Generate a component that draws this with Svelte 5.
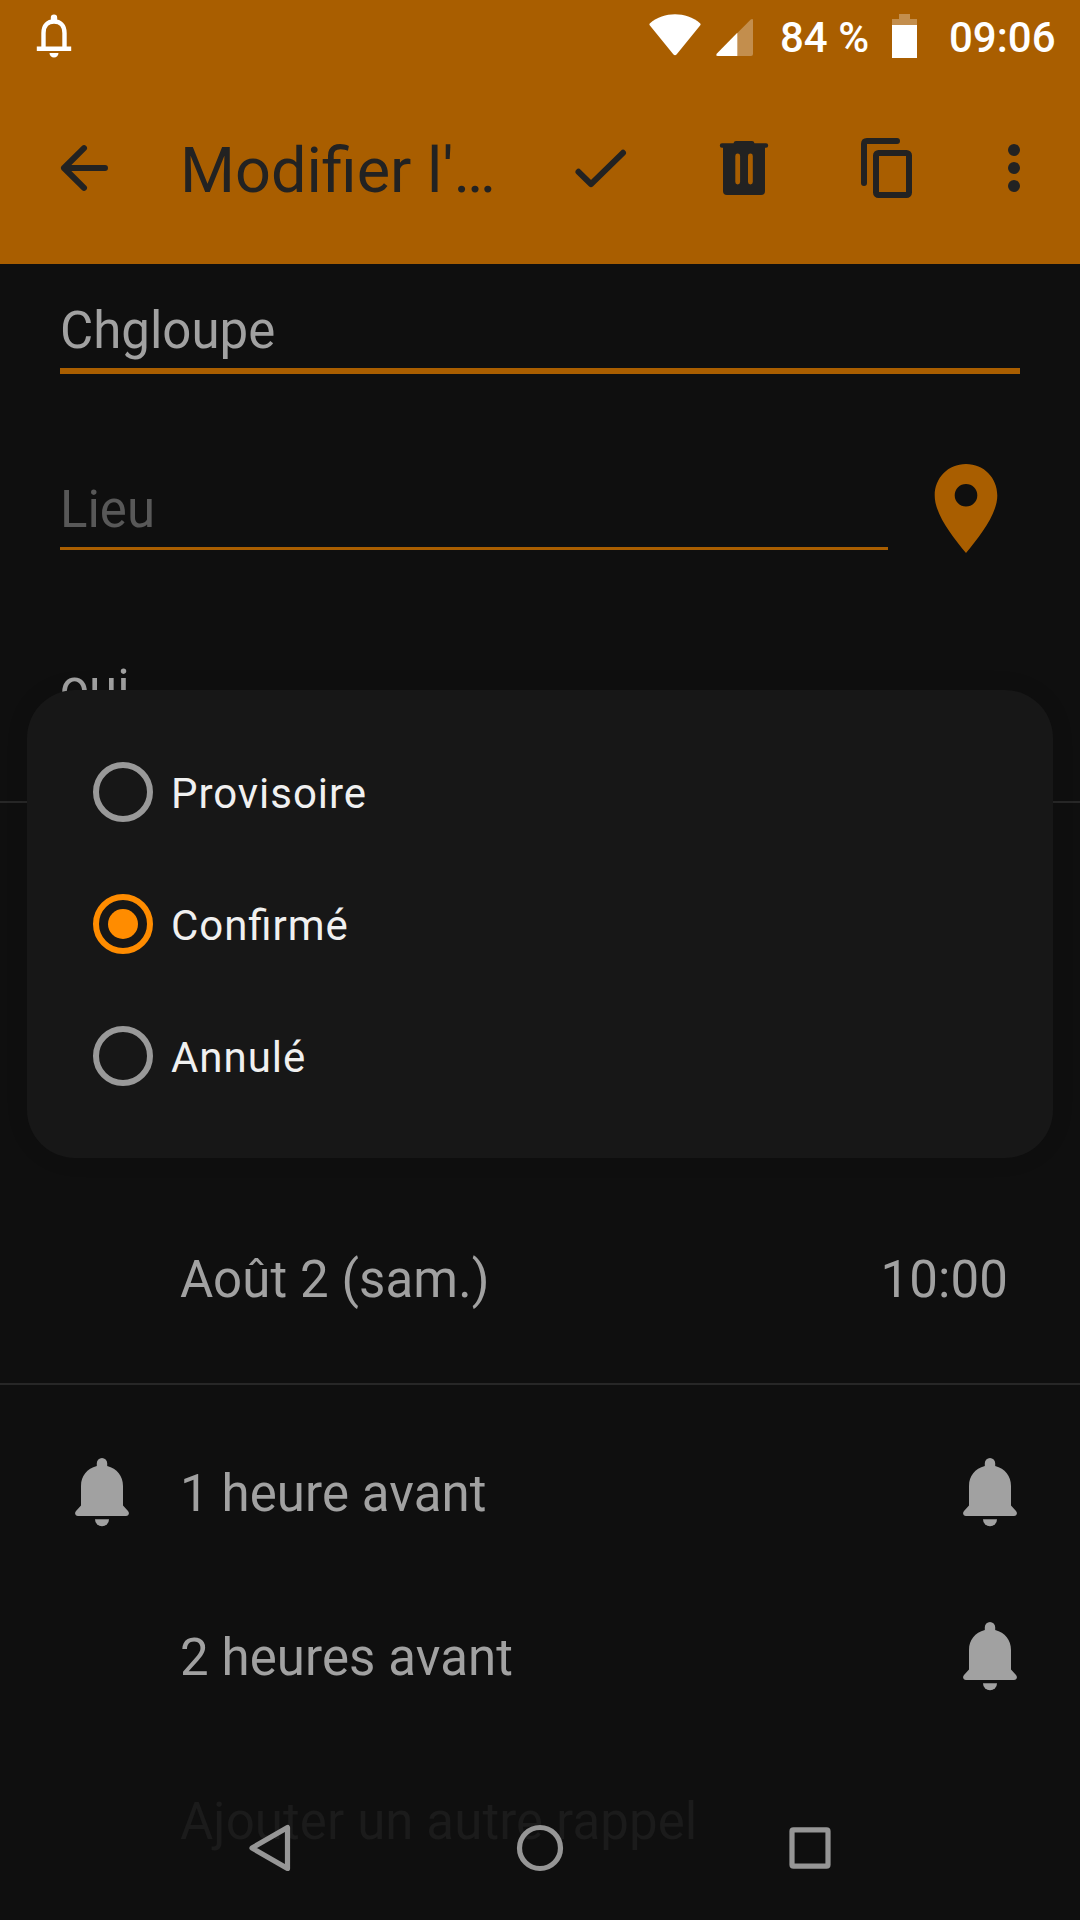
<script lang="ts">
	const statuses = ['Provisoire', 'Confirmé', 'Annulé'];
	const reminders = ['1 heure avant', '2 heures avant'];

	let selected = $state('Confirmé');
</script>

{#snippet bell()}
	<svg class="bell" viewBox="0 0 54 69" fill="currentColor">
		<path
			d="M21.800 8V5.200a5.200 5.200 0 0 1 10.400 0V8C42 10.500 48 18 48 28v19.500l5 5.500c2 2.500.5 5-2 5H3c-2.500 0-4-2.500-2-5l5-5.500V28C6 18 12 10.500 21.800 8z"
		/>
		<path d="M20 61.300h14a7 7 0 0 1-14 0z" />
	</svg>
{/snippet}

<div class="screen">
	<header>
		<div class="status-bar">
			<svg class="notification" width="36" height="44" viewBox="0 0 36 44">
				<path
					d="M7.500 34V19C7.500 11 12 7.500 18 7.500S28.500 11 28.500 19v15"
					fill="none"
					stroke="#fff"
					stroke-width="4.400"
				/>
				<path
					d="M14.800 7V3.800a3.200 3.200 0 0 1 6.400 0V7zM.8 32.600h34.400V37H.8zM13.500 39h9a4.500 4.500 0 0 1-9 0z"
					fill="#fff"
				/>
			</svg>
			<svg class="wifi" width="52" height="42" viewBox="0 0 52 42" fill="#fff">
				<path
					d="M1 9.200C15-2.600 37-2.600 51 9.200q1 1 .3 2L27.500 40.500q-1.500 1.500-3 0L.7 11.200q-.7-1 .3-2z"
				/>
			</svg>
			<svg class="signal" width="37" height="37" viewBox="0 0 37 37" fill="#fff">
				<path d="M34.500.8Q37-1 37 1.500V35q0 2-2 2H2Q-.8 37 1 34.500z" opacity=".3" />
				<path d="M21.300 13.800V37H2Q-.8 37 1 34.500z" />
			</svg>
			<span class="battery-level">84 %</span>
			<svg class="battery" width="25" height="44" viewBox="0 0 25 44" fill="#fff">
				<path d="M7 0h11v5h7v6H0V5h7z" opacity=".3" />
				<path d="M0 11h25v33H0z" />
			</svg>
			<span class="clock">09:06</span>
		</div>

		<div class="app-bar">
			<button type="button" class="icon-button back" aria-label="Retour">
				<svg viewBox="0 0 72 72">
					<path d="M57 36H16M36 16.200 16 36l20 19.800" class="line" />
				</svg>
			</button>
			<h1>Modifier l'…</h1>
			<button type="button" class="icon-button" aria-label="Enregistrer">
				<svg viewBox="0 0 72 72">
					<path d="M14.500 39.800 27 52.200 59 20.800" class="line" />
				</svg>
			</button>
			<button type="button" class="icon-button" aria-label="Supprimer">
				<svg viewBox="0 0 72 72" fill="currentColor">
					<path
						fill-rule="evenodd"
						d="M28 9h16q2 0 2.500 2.300H58a2.200 2.200 0 0 1 0 4.400h-1V59q0 4-4 4H19q-4 0-4-4V15.700h-1a2.200 2.200 0 0 1 0-4.400h11.500Q26 9 28 9zM27.300 24v26a2.400 2.400 0 0 0 4.800 0V24a2.400 2.400 0 0 0-4.800 0zM40 24v26a2.400 2.400 0 0 0 4.800 0V24a2.400 2.400 0 0 0-4.800 0z"
					/>
				</svg>
			</button>
			<button type="button" class="icon-button" aria-label="Dupliquer">
				<svg viewBox="0 0 72 72">
					<path d="M45 9H15q-3 0-3 3v39" class="line" />
					<rect x="24" y="21" width="33" height="42" rx="2.500" class="line" />
				</svg>
			</button>
			<button type="button" class="icon-button more" aria-label="Plus">
				<svg viewBox="0 0 72 72" fill="currentColor">
					<circle cx="36" cy="18" r="6" />
					<circle cx="36" cy="36" r="6" />
					<circle cx="36" cy="54" r="6" />
				</svg>
			</button>
		</div>
	</header>

	<main>
		<section class="details">
			<div class="field focused">Chgloupe</div>
			<div class="location">
				<div class="field hint">Lieu</div>
				<svg class="pin" width="64" height="89" viewBox="0 0 64 89">
					<path
						fill="#a95e00"
						fill-rule="evenodd"
						d="M32 0C14 0 .700 14 .700 31.500.700 50 18 72 32 89 46 72 63.300 50 63.300 31.500 63.300 14 50 0 32 0zM32 20a11.300 11.300 0 1 1 0 22.600A11.300 11.300 0 0 1 32 20z"
					/>
				</svg>
			</div>
			<div class="description">oui</div>
		</section>

		<section class="dates">
			<div class="row">
				<span class="label">Août 2 (sam.)</span>
				<span class="label time">10:00</span>
			</div>
		</section>

		<section class="reminders">
			{#each reminders as reminder, i}
				<div class="row">
					<div class="lead">
						{#if i === 0}
							{@render bell()}
						{/if}
					</div>
					<span class="label">{reminder}</span>
					<div class="trail">{@render bell()}</div>
				</div>
			{/each}
			<div class="row add">
				<span class="label">Ajouter un autre rappel</span>
			</div>
		</section>
	</main>

	<div class="dialog" role="radiogroup">
		{#each statuses as status}
			<button
				type="button"
				class="option"
				class:checked={status === selected}
				role="radio"
				aria-checked={status === selected}
				onclick={() => (selected = status)}
			>
				<span class="radio"></span>
				<span class="option-label">{status}</span>
			</button>
		{/each}
	</div>

	<nav>
		<svg width="46" height="52" viewBox="0 0 46 52">
			<path d="M40.500 5.500v41L5 26z" />
		</svg>
		<svg width="52" height="52" viewBox="0 0 52 52">
			<circle cx="26" cy="26" r="20.500" />
		</svg>
		<svg width="46" height="52" viewBox="0 0 46 52">
			<rect x="5" y="7.800" width="36" height="36.400" rx="1.500" />
		</svg>
	</nav>
</div>

<style>
	:global(body) {
		margin: 0;
		background-color: #0f0f0f;
	}

	.screen {
		position: relative;
		width: 1080px;
		height: 1920px;
		overflow: hidden;
		background-color: #0f0f0f;
		color: #a1a1a1;
		font-family: Roboto, sans-serif;
		font-size: 51px;
		line-height: 76px;
	}

	button {
		padding: 0;
		border: none;
		background: none;
		color: inherit;
		font: inherit;
		text-align: left;
	}

	header {
		height: 264px;
		background-color: #a95e00;
		color: #222;
	}

	.status-bar {
		display: flex;
		align-items: flex-start;
		height: 72px;
		box-sizing: border-box;
		padding: 14px 24px 0 36px;
		color: #fff;
		font-size: 42px;
		font-weight: 500;
		line-height: 48px;
	}

	.wifi {
		margin-left: auto;
	}

	.signal {
		margin: 5px 0 0 15px;
	}

	.battery-level {
		width: 90px;
		margin-left: 27px;
		white-space: nowrap;
	}

	.battery {
		margin-left: 22px;
	}

	.clock {
		width: 107px;
		margin-left: 32px;
	}

	.app-bar {
		display: flex;
		align-items: center;
		height: 192px;
		padding-right: 12px;
	}

	.icon-button {
		display: flex;
		align-items: center;
		justify-content: center;
		width: 144px;
		height: 144px;
	}

	.icon-button svg {
		width: 72px;
		height: 72px;
	}

	.back {
		width: 168px;
	}

	.more {
		width: 108px;
	}

	.line {
		fill: none;
		stroke: currentColor;
		stroke-width: 6;
		stroke-linecap: round;
		stroke-linejoin: round;
	}

	h1 {
		flex: 1;
		margin: 0;
		padding: 5px 0 0 12px;
		font-size: 63px;
		font-weight: 400;
		white-space: nowrap;
	}

	.details {
		height: 537px;
		padding: 28px 60px 0;
		box-sizing: border-box;
	}

	.field {
		padding-top: 2px;
		border-bottom: 3px solid #a95e00;
		line-height: 74px;
	}

	.focused {
		border-bottom-width: 6px;
	}

	.location {
		display: flex;
		align-items: flex-start;
		margin: 97px 0 100px;
		height: 79px;
	}

	.location .field {
		width: 828px;
	}

	.hint {
		color: #585858;
	}

	.pin {
		margin: -7px 0 0 46px;
	}

	.description {
		padding-top: 1px;
	}

	.dates {
		display: flex;
		flex-direction: column;
		justify-content: flex-end;
		height: 584px;
		box-sizing: border-box;
		padding-bottom: 22px;
		border-top: 2px solid #272727;
		border-bottom: 2px solid #272727;
	}

	.row {
		display: flex;
		align-items: center;
		height: 164px;
		padding-right: 60px;
	}

	.dates .row,
	.add {
		padding-left: 180px;
	}

	.label {
		padding-top: 2px;
		letter-spacing: 0.1px;
	}

	.time {
		margin-left: auto;
		padding-right: 12px;
	}

	.reminders {
		padding-top: 26px;
	}

	.lead {
		display: flex;
		width: 105px;
		padding-left: 75px;
	}

	.trail {
		display: flex;
		margin-left: auto;
		padding-right: 3px;
	}

	.bell {
		width: 54px;
		height: 69px;
		margin-bottom: 2px;
	}

	.add {
		color: #1b1b1b;
	}

	.dialog {
		position: absolute;
		top: 690px;
		left: 27px;
		width: 1026px;
		height: 468px;
		box-sizing: border-box;
		padding: 36px 66px;
		border-radius: 48px;
		background-color: #171717;
		box-shadow: 0 0 24px rgba(0, 0, 0, 0.08);
	}

	.option {
		display: flex;
		align-items: center;
		gap: 18px;
		width: 100%;
		height: 132px;
		color: #f0f0f0;
		font-size: 42px;
		letter-spacing: 0.95px;
		font-feature-settings: 'liga' 1;
	}

	.option-label {
		padding-top: 4px;
	}

	.radio {
		display: flex;
		align-items: center;
		justify-content: center;
		width: 60px;
		height: 60px;
		box-sizing: border-box;
		border: 6px solid #999;
		border-radius: 50%;
	}

	.checked .radio {
		border-color: #ff8c00;
	}

	.checked .radio::after {
		content: '';
		width: 30px;
		height: 30px;
		border-radius: 50%;
		background-color: #ff8c00;
	}

	nav {
		position: absolute;
		left: 0;
		right: 0;
		bottom: 0;
		display: flex;
		align-items: center;
		justify-content: space-between;
		height: 144px;
		padding: 0 247px;
	}

	nav svg {
		fill: none;
		stroke: #969696;
		stroke-width: 5.2;
		stroke-linejoin: round;
	}
</style>
